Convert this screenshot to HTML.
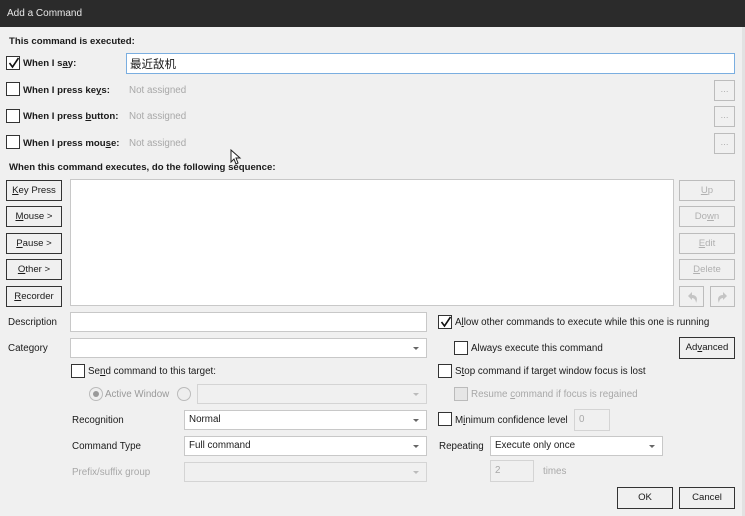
<!DOCTYPE html>
<html><head><meta charset="utf-8"><style>
*{box-sizing:border-box;margin:0;padding:0}
body{width:745px;height:516px;background:#f0f0f0;font-family:"Liberation Sans","Noto Sans CJK SC",sans-serif;font-size:9.8px;color:#1a1a1a;position:relative;overflow:hidden}
.a{position:absolute;white-space:nowrap}
.b{font-weight:bold;font-size:9.6px}
.g{color:#a8a8a8}
.cb{position:absolute;width:14px;height:14px;border:1px solid #333;background:#fff}
.cb.d{border-color:#bbb;background:#e6e6e6}
.in{position:absolute;background:#fff;border:1px solid #c8c8c8}
.in.d{background:#f0f0f0;border-color:#d4d4d4}
.sel::after{content:"";position:absolute;right:7px;top:50%;margin-top:-1px;border-left:3px solid transparent;border-right:3px solid transparent;border-top:3px solid #666}
.sel.d::after{border-top-color:#bbb}
.btn{position:absolute;border:1px solid #333;background:#f0f0f0;text-align:center;font-size:9.6px}
.btn.d{border-color:#bcbcbc;color:#b0b0b0}
.t{padding-left:4px;line-height:18px}
u{text-decoration:underline}
</style></head><body>
<div class="a" style="left:0;top:0;width:745px;height:27px;background:#2b2b2b"></div>
<div class="a" style="left:7px;top:8px;color:#e8e8e8;font-size:10px">Add a Command</div>
<div class="a" style="left:742px;top:27px;width:3px;height:489px;background:#e2e2e2"></div>

<div class="a b" style="left:9px;top:36px">This command is executed:</div>
<div class="cb" style="left:6px;top:56px"></div>
<svg class="a" style="left:7px;top:56px" width="14" height="14"><path d="M2.5 7 L5.5 11 L11.5 2" stroke="#111" stroke-width="1.6" fill="none"/></svg>
<div class="a b" style="left:23px;top:58px">When I s<u>a</u>y:</div>
<div class="in" style="left:126px;top:53px;width:609px;height:21px;border-color:#7aaee0"></div>
<div class="a" style="left:130px;top:56px;font-size:11.5px">最近敌机</div>

<div class="cb" style="left:6px;top:82px"></div><div class="a b" style="left:23px;top:85px">When I press ke<u>y</u>s:</div><div class="a g" style="left:129px;top:85px">Not assigned</div>
<div class="cb" style="left:6px;top:109px"></div><div class="a b" style="left:23px;top:111px">When I press <u>b</u>utton:</div><div class="a g" style="left:129px;top:111px">Not assigned</div>
<div class="cb" style="left:6px;top:135px"></div><div class="a b" style="left:23px;top:138px">When I press mou<u>s</u>e:</div><div class="a g" style="left:129px;top:138px">Not assigned</div>
<div class="btn d" style="left:714px;top:80px;width:21px;height:21px;line-height:17px">...</div>
<div class="btn d" style="left:714px;top:106px;width:21px;height:21px;line-height:17px">...</div>
<div class="btn d" style="left:714px;top:133px;width:21px;height:21px;line-height:17px">...</div>
<svg class="a" style="left:230px;top:149px" width="12" height="16"><path d="M1 1 L1 13 L4 10 L6 15 L8 14 L6 9 L10 9 Z" fill="#fff" stroke="#222" stroke-width="1"/></svg>

<div class="a b" style="left:9px;top:162px">When this command executes, do the following sequence:</div>
<div class="btn" style="left:6px;top:180px;width:56px;height:21px;line-height:19px"><u>K</u>ey Press</div>
<div class="btn" style="left:6px;top:206px;width:56px;height:21px;line-height:19px"><u>M</u>ouse &gt;</div>
<div class="btn" style="left:6px;top:233px;width:56px;height:21px;line-height:19px"><u>P</u>ause &gt;</div>
<div class="btn" style="left:6px;top:259px;width:56px;height:21px;line-height:19px"><u>O</u>ther &gt;</div>
<div class="btn" style="left:6px;top:286px;width:56px;height:21px;line-height:19px"><u>R</u>ecorder</div>
<div class="in" style="left:70px;top:179px;width:604px;height:127px"></div>
<div class="btn d" style="left:679px;top:180px;width:56px;height:21px;line-height:19px"><u>U</u>p</div>
<div class="btn d" style="left:679px;top:206px;width:56px;height:21px;line-height:19px">Do<u>w</u>n</div>
<div class="btn d" style="left:679px;top:233px;width:56px;height:21px;line-height:19px"><u>E</u>dit</div>
<div class="btn d" style="left:679px;top:259px;width:56px;height:21px;line-height:19px"><u>D</u>elete</div>
<div class="btn d" style="left:679px;top:286px;width:25px;height:21px"></div>
<div class="btn d" style="left:710px;top:286px;width:25px;height:21px"></div>
<svg class="a" style="left:683px;top:288px" width="18" height="18"><path d="M5 8 L9 4 L9 7 C14 7 15 11 13 15 C13 12 11 10 9 10 L9 12 Z" fill="#c4c4c4"/></svg>
<svg class="a" style="left:714px;top:288px" width="18" height="18"><path d="M13 8 L9 4 L9 7 C4 7 3 11 5 15 C5 12 7 10 9 10 L9 12 Z" fill="#c4c4c4"/></svg>

<div class="a" style="left:8px;top:317px">Description</div>
<div class="in" style="left:70px;top:312px;width:357px;height:20px"></div>
<div class="a" style="left:8px;top:343px">Category</div>
<div class="in sel" style="left:70px;top:338px;width:357px;height:20px"></div>

<div class="cb" style="left:438px;top:315px"></div>
<svg class="a" style="left:439px;top:315px" width="14" height="14"><path d="M2.5 7 L5.5 11 L11.5 2" stroke="#111" stroke-width="1.6" fill="none"/></svg>
<div class="a" style="left:455px;top:317px">A<u>l</u>low other commands to execute while this one is running</div>
<div class="cb" style="left:454px;top:341px"></div><div class="a" style="left:471px;top:343px">Always execute this command</div>
<div class="btn" style="left:679px;top:337px;width:56px;height:22px;line-height:20px">Ad<u>v</u>anced</div>

<div class="cb" style="left:71px;top:364px"></div><div class="a" style="left:88px;top:366px">Se<u>n</u>d command to this target:</div>
<div class="cb" style="left:438px;top:364px"></div><div class="a" style="left:455px;top:366px">S<u>t</u>op command if target window focus is lost</div>
<div class="a" style="left:89px;top:387px;width:14px;height:14px;border-radius:50%;border:1px solid #bbb;background:#eee"></div>
<div class="a" style="left:93px;top:391px;width:6px;height:6px;border-radius:50%;background:#999"></div>
<div class="a g" style="left:105px;top:389px;color:#999">Active Window</div>
<div class="a" style="left:177px;top:387px;width:14px;height:14px;border-radius:50%;border:1px solid #bbb;background:#eee"></div>
<div class="in d sel" style="left:197px;top:384px;width:230px;height:20px"></div>
<div class="cb d" style="left:454px;top:387px"></div><div class="a g" style="left:471px;top:389px">Resume <u>c</u>ommand if focus is regained</div>

<div class="a" style="left:72px;top:415px">Recognition</div>
<div class="in sel t" style="left:184px;top:410px;width:243px;height:20px">Normal</div>
<div class="cb" style="left:438px;top:412px"></div><div class="a" style="left:455px;top:415px">M<u>i</u>nimum confidence level</div>
<div class="in d t g" style="left:574px;top:409px;width:36px;height:22px;line-height:20px">0</div>
<div class="a" style="left:72px;top:441px">Command Type</div>
<div class="in sel t" style="left:184px;top:436px;width:243px;height:20px">Full command</div>
<div class="a" style="left:439px;top:441px">Repeating</div>
<div class="in sel t" style="left:490px;top:436px;width:173px;height:20px">Execute only once</div>
<div class="a g" style="left:72px;top:467px">Prefix/suffix group</div>
<div class="in d sel" style="left:184px;top:462px;width:243px;height:20px"></div>
<div class="in d t g" style="left:490px;top:460px;width:44px;height:22px;line-height:20px">2</div>
<div class="a g" style="left:543px;top:466px">times</div>
<div class="btn" style="left:617px;top:487px;width:56px;height:22px;line-height:20px">OK</div>
<div class="btn" style="left:679px;top:487px;width:56px;height:22px;line-height:20px">Cancel</div>
</body></html>
